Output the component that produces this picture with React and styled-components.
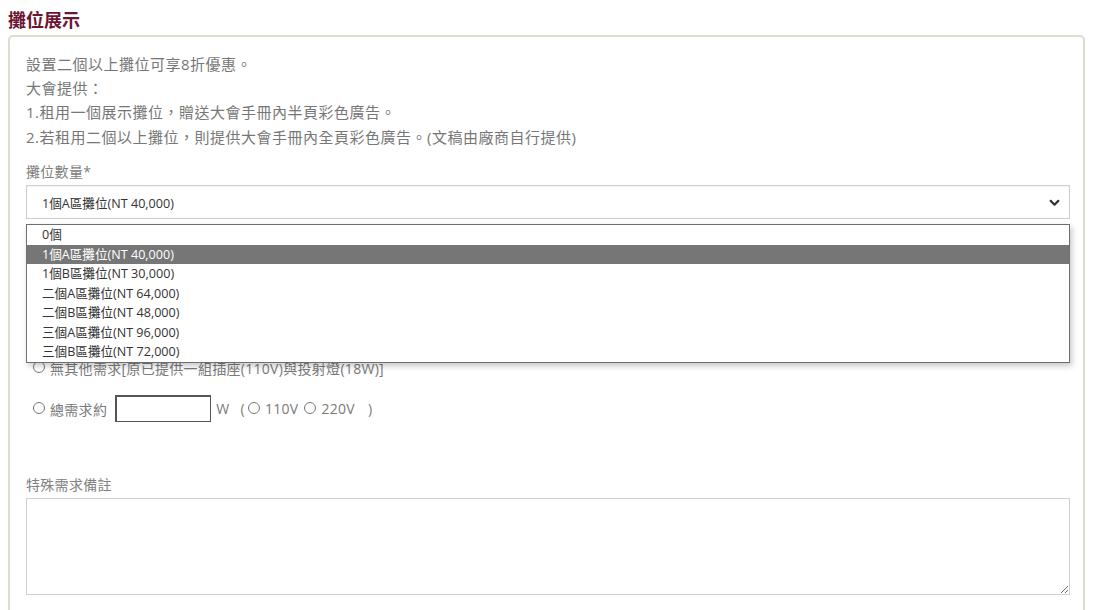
import styled, { createGlobalStyle } from "styled-components";

const options = [
  "0個",
  "1個A區攤位(NT 40,000)",
  "1個B區攤位(NT 30,000)",
  "二個A區攤位(NT 64,000)",
  "二個B區攤位(NT 48,000)",
  "三個A區攤位(NT 96,000)",
  "三個B區攤位(NT 72,000)",
];

function App() {
  const selected = 1;

  return (
    <>
      <GlobalStyle />
      <Title>攤位展示</Title>
      <Panel>
        <Notes>
          <p>設置二個以上攤位可享8折優惠。</p>
          <p>大會提供：</p>
          <p>1.租用一個展示攤位，贈送大會手冊內半頁彩色廣告。</p>
          <p>2.若租用二個以上攤位，則提供大會手冊內全頁彩色廣告。(文稿由廠商自行提供)</p>
        </Notes>

        <Label $top={12}>攤位數量*</Label>
        <SelectWrap>
          <SelectBox>
            <span>{options[selected]}</span>
            <svg width="13" height="13" viewBox="0 0 24 24" fill="none" stroke="#333" strokeWidth="4" strokeLinecap="round" strokeLinejoin="round">
              <path d="M5 9l7 7 7-7" />
            </svg>
          </SelectBox>
          <OptionList>
            {options.map((o, i) => (
              <Option key={o} $active={i === selected}>
                {o}
              </Option>
            ))}
          </OptionList>
        </SelectWrap>

        <PowerGroup>
          <RadioRow>
            <Radio />
            <span>無其他需求[原已提供一組插座(110V)與投射燈(18W)]</span>
          </RadioRow>
          <RadioRow>
            <Radio />
            <span>總需求約</span>
            <WattInput type="text" />
            <span>W</span>
            <Paren>(</Paren>
            <Radio />
            <span>110V</span>
            <Radio $gap={6} />
            <span>220V</span>
            <Paren $right>)</Paren>
          </RadioRow>
        </PowerGroup>

        <Label $top={52}>特殊需求備註</Label>
        <Remark />
      </Panel>
    </>
  );
}

export default App;

const GlobalStyle = createGlobalStyle`
  body {
    margin: 8px;
    background: #fff;
    font-family: "Open Sans", "Noto Sans CJK TC", sans-serif;
    color: #777;
  }
`;

const Title = styled.h2`
  margin: 0;
  font-size: 18px;
  line-height: 22px;
  font-weight: bold;
  color: #6b1632;
  font-family: "Noto Sans CJK TC", sans-serif;
`;

const Panel = styled.div`
  margin: 5px 4px 0 0;
  border: 2px solid #d8dfcd;
  border-radius: 5px;
  padding: 15px 13px 20px 16px;
  font-size: 14px;
`;

const Notes = styled.div`
  p {
    margin: 0;
    line-height: 24px;
    font-size: 15px;
    letter-spacing: 0.5px;
    font-family: "Open Sans", "Noto Sans CJK TC", sans-serif;
  }
  p:last-child {
    margin-top: 1px;
  }
`;

const Label = styled.div`
  margin-top: ${(p) => p.$top}px;
  line-height: 22px;
  font-size: 14px;
  letter-spacing: 0.3px;
  color: #808080;
`;

const SelectWrap = styled.div`
  position: relative;
  margin-top: 2px;
`;

const SelectBox = styled.div`
  height: 34px;
  box-sizing: border-box;
  border: 1px solid #cfcfcf;
  box-shadow: inset 0 1px 2px rgba(0, 0, 0, 0.06);
  display: flex;
  align-items: center;
  justify-content: space-between;
  padding: 0 8px 0 15px;
  font-size: 12.6px;
  color: #333;
  background: #fff;
`;

const OptionList = styled.div`
  position: absolute;
  top: 39px;
  left: 0;
  right: 0;
  background: #fff;
  border: 1px solid #6f6f6f;
  box-shadow: 2px 3px 6px rgba(0, 0, 0, 0.22);
  z-index: 2;
`;

const Option = styled.div`
  height: 19.5px;
  line-height: 20px;
  padding-left: 15px;
  font-size: 12.6px;
  color: ${(p) => (p.$active ? "#fff" : "#333")};
  background: ${(p) => (p.$active ? "#767676" : "#fff")};
`;

const PowerGroup = styled.div`
  margin-top: 138px;
  padding-left: 6px;
  display: flex;
  flex-direction: column;
  gap: 16px;
`;

const RadioRow = styled.div`
  display: flex;
  align-items: center;
  min-height: 27px;
  font-size: 14px;
  letter-spacing: 0.3px;
  color: #7a7a7a;
  white-space: nowrap;
  &:first-child {
    min-height: 22px;
  }
`;

const Radio = styled.span`
  display: inline-block;
  width: 10px;
  height: 10px;
  border: 1px solid #777;
  border-radius: 50%;
  margin: 0 5px 2px ${(p) => p.$gap || 1}px;
`;

const WattInput = styled.input`
  width: 96px;
  height: 27px;
  box-sizing: border-box;
  margin: 0 5px 0 8px;
  border: 1px solid #555;
  border-top-width: 2px;
  border-left-width: 2px;
  outline: none;
`;

const Paren = styled.span`
  margin: ${(p) => (p.$right ? "0 0 0 13px" : "0 2px 0 11px")};
`;

const Remark = styled.textarea`
  display: block;
  margin-top: 2px;
  width: 100%;
  height: 97px;
  box-sizing: border-box;
  border: 1px solid #d0d0d0;
  outline: none;
  resize: vertical;
  font-family: inherit;
`;
